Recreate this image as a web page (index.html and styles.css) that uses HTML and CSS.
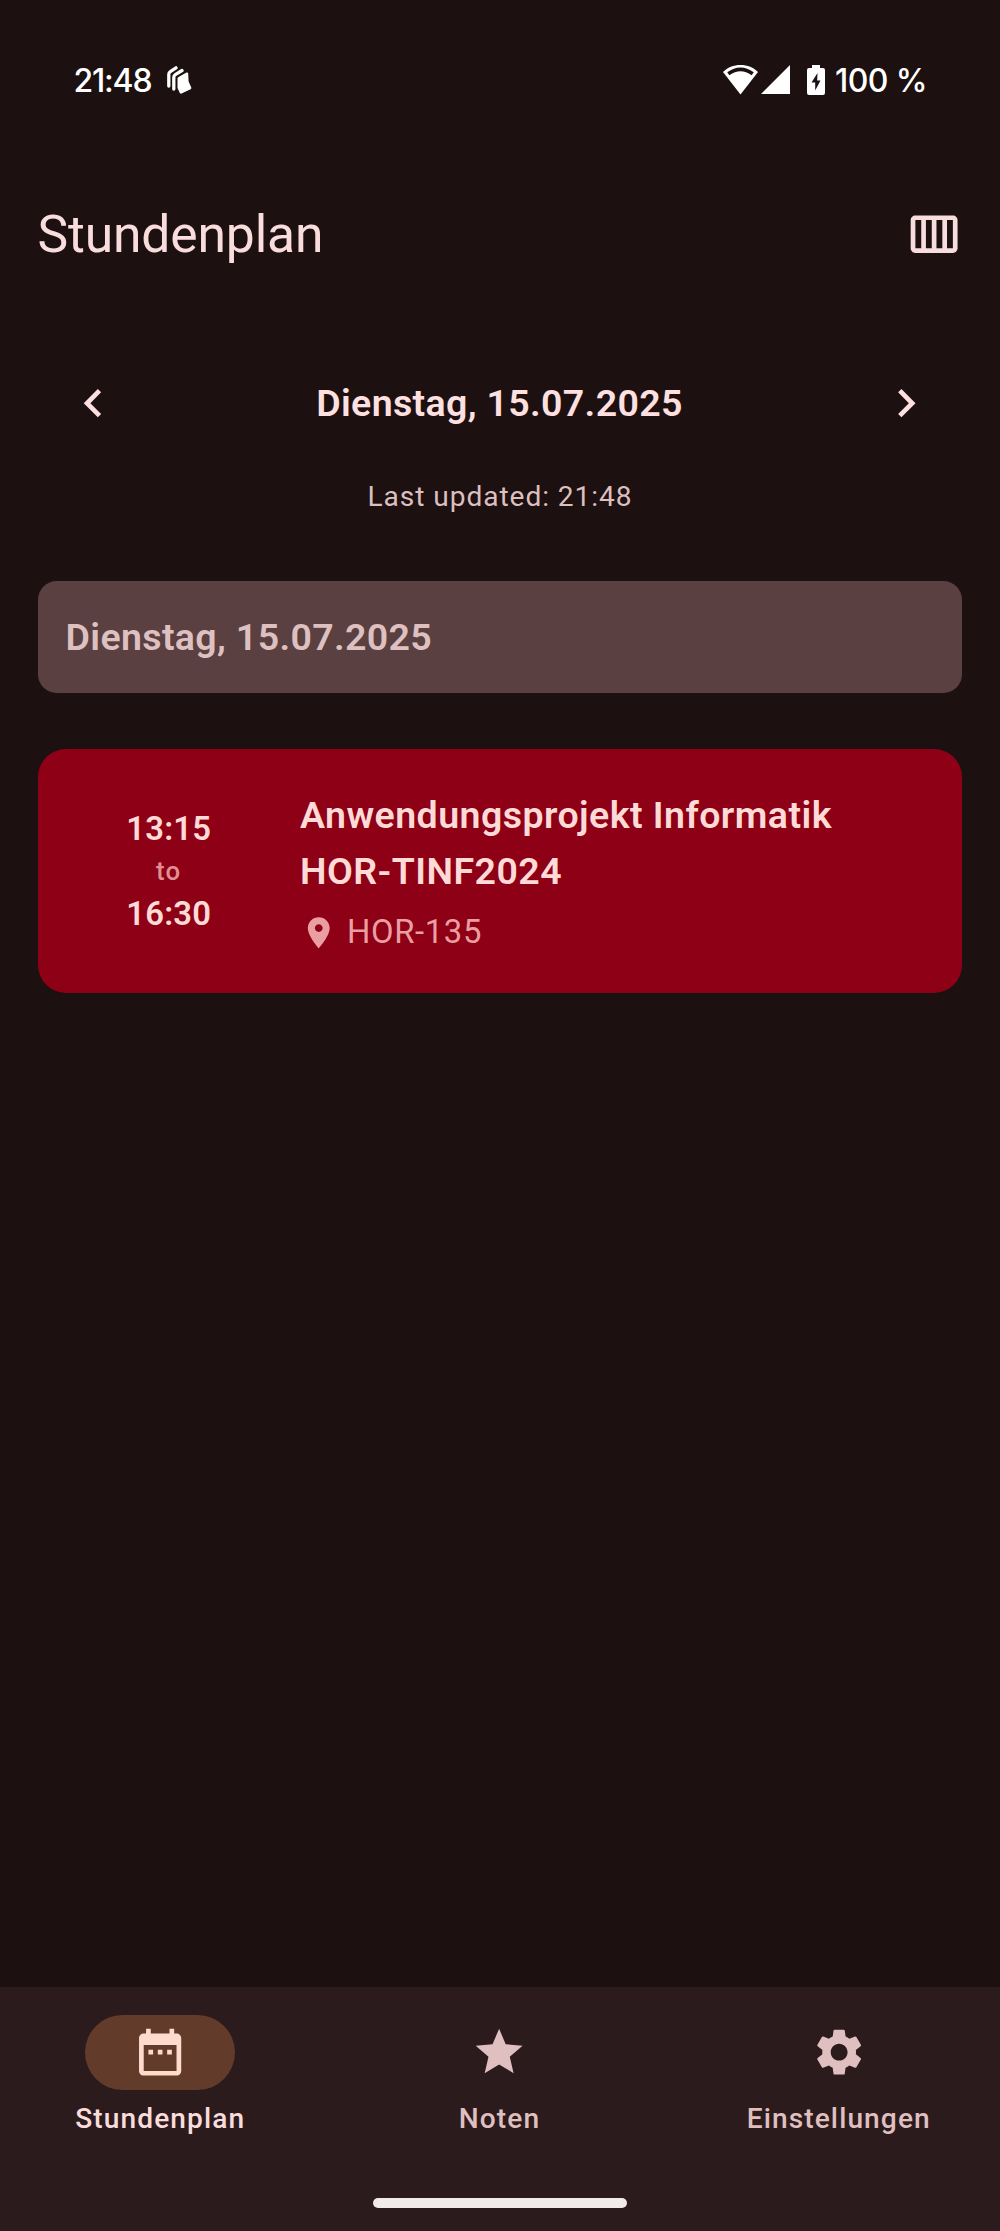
FILE: index.html
```html
<!DOCTYPE html>
<html lang="de">
<head>
<meta charset="utf-8">
<title>Stundenplan</title>
<link rel="stylesheet" href="styles.css">
</head>
<body>
<div class="screen">
  <div class="status-bar">
    <div class="status-left">
      <span class="clock">21:48</span>
      <svg class="cards-icon" viewBox="0 0 25 28"><path d="M1.800 20V8.500Q1.800 6.500 3.300 5.600L9 1.800M6.800 23V11.500Q6.800 9.500 8.300 8.600L15 4.500" fill="none" stroke="#fff" stroke-width="3.300" stroke-linecap="round"/><path d="M10.500 12.500Q10.500 11.500 11.500 11L19.500 6.500Q21 6 21.200 7.500L21.600 15.500L24.300 21.500Q24.600 22.600 23.600 23.200L14.500 27.600Q13.300 28 12.700 26.800L10.500 22Z" fill="#fff"/></svg>
    </div>
    <div class="status-right">
      <svg class="wifi-icon" viewBox="0 0 35 30"><path d="M17.500 0C10.500 0 4.500 2.500 0 7L17.500 29.500L35 7C30.500 2.500 24.500 0 17.500 0Z" fill="#fff"/><path d="M5.300 8.800Q17.500 0 29.700 8.800" fill="none" stroke="#1d1010" stroke-width="3.600"/></svg>
      <svg class="signal-icon" viewBox="0 0 29 29"><path d="M29 0V29H0Z" fill="#fff"/></svg>
      <svg class="battery-icon" viewBox="0 0 18 30"><path d="M5 0H13V3H16Q18 3 18 5V28Q18 30 16 30H2Q0 30 0 28V5Q0 3 2 3H5Z" fill="#fff"/><path d="M10.500 8L4.500 17.500H8.200V25.500L13.500 15.500H10.200Z" fill="#1d1010"/></svg>
      <span class="battery-text">100 %</span>
    </div>
  </div>

  <header class="app-bar">
    <h1>Stundenplan</h1>
    <svg class="icon" viewBox="0 0 24 24"><path d="M20 4H4c-1.100 0-2 .9-2 2v12c0 1.100.9 2 2 2h16c1.100 0 2-.9 2-2V6c0-1.100-.9-2-2-2zm-7 2h2.500v12H13V6zm-2 12H8.500V6H11v12zM4 6h2.500v12H4V6zm16 12h-2.500V6H20v12z"/></svg>
  </header>

  <div class="day-switch">
    <svg class="icon" viewBox="0 0 24 24"><path d="M15.410 7.410 14 6l-6 6 6 6 1.410-1.410L10.830 12z"/></svg>
    <span class="day-title">Dienstag, 15.07.2025</span>
    <svg class="icon" viewBox="0 0 24 24"><path d="M10 6 8.590 7.410 13.170 12l-4.580 4.590L10 18l6-6z"/></svg>
  </div>
  <p class="updated">Last updated: 21:48</p>

  <main class="schedule">
    <h2 class="day-header">Dienstag, 15.07.2025</h2>
    <article class="lesson">
      <div class="lesson-time">
        <span class="time">13:15</span>
        <span class="to">to</span>
        <span class="time">16:30</span>
      </div>
      <div class="lesson-info">
        <h3>Anwendungsprojekt Informatik<br>HOR-TINF2024</h3>
        <div class="room">
          <svg class="pin" viewBox="0 0 24 24"><path d="M12 2C8.130 2 5 5.130 5 9c0 5.250 7 13 7 13s7-7.750 7-13c0-3.870-3.130-7-7-7zm0 9.500c-1.380 0-2.500-1.120-2.500-2.500s1.120-2.500 2.500-2.500 2.500 1.120 2.500 2.500-1.120 2.500-2.500 2.500z"/></svg>
          <span>HOR-135</span>
        </div>
      </div>
    </article>
  </main>

  <footer class="bottom">
    <nav class="tabs">
      <div class="tab active">
        <span class="pill"><svg class="icon" viewBox="0 0 24 24"><path d="M9 11H7v2h2v-2zm4 0h-2v2h2v-2zm4 0h-2v2h2v-2zm2-7h-1V2h-2v2H8V2H6v2H5c-1.110 0-1.990.9-1.990 2L3 20c0 1.100.89 2 2 2h14c1.100 0 2-.9 2-2V6c0-1.100-.9-2-2-2zm0 16H5V9h14v11z"/></svg></span>
        <span class="label">Stundenplan</span>
      </div>
      <div class="tab">
        <span class="pill"><svg class="icon" viewBox="0 0 24 24"><path d="M12 17.270 18.180 21l-1.640-7.030L22 9.240l-7.190-.61L12 2 9.190 8.630 2 9.240l5.460 4.730L5.820 21z"/></svg></span>
        <span class="label">Noten</span>
      </div>
      <div class="tab">
        <span class="pill"><svg class="icon" viewBox="0 0 24 24"><path d="M19.140 12.940c.04-.3.060-.61.060-.94 0-.32-.02-.64-.07-.94l2.030-1.580c.18-.14.230-.41.120-.61l-1.920-3.320c-.12-.22-.37-.29-.59-.22l-2.390.96c-.5-.38-1.030-.7-1.620-.94l-.36-2.540c-.04-.24-.24-.41-.48-.41h-3.840c-.24 0-.43.170-.47.410l-.36 2.540c-.59.240-1.130.57-1.620.94l-2.390-.96c-.22-.08-.47 0-.59.220L2.740 8.870c-.12.210-.08.470.12.610l2.030 1.580c-.05.3-.09.630-.09.940s.02.640.07.940l-2.030 1.580c-.18.140-.23.410-.12.610l1.920 3.320c.12.220.37.290.59.220l2.390-.96c.5.380 1.030.7 1.620.94l.36 2.540c.05.240.24.410.48.410h3.840c.24 0 .44-.17.470-.41l.36-2.540c.59-.24 1.130-.56 1.620-.94l2.390.96c.22.080.47 0 .59-.22l1.920-3.320c.12-.22.070-.47-.12-.61l-2.010-1.580zM12 15.600c-1.980 0-3.600-1.620-3.600-3.600s1.620-3.600 3.600-3.600 3.600 1.620 3.600 3.600-1.620 3.600-3.600 3.600z"/></svg></span>
        <span class="label">Einstellungen</span>
      </div>
    </nav>
    <div class="home-handle"></div>
  </footer>
</div>
</body>
</html>
```
FILE: styles.css
```css
* { box-sizing: border-box; }
body {
  margin: 0;
  background: #1d1010;
  color: #f9dcdc;
  font-family: Roboto, "Liberation Sans", sans-serif;
}
h1, h2, h3, p { margin: 0; }
svg { display: block; flex: none; }

.screen {
  display: flex;
  flex-direction: column;
  height: 2231px;
}
.icon {
  width: 56.25px;
  height: 56.25px;
  fill: currentColor;
}

/* System status bar */
.status-bar {
  display: flex;
  justify-content: space-between;
  align-items: center;
  height: 159.4px;
  padding: 0 73px 0 73.5px;
  color: #fff;
  font: 500 32px/40px Inter, Roboto, sans-serif;
}
.status-left, .status-right { display: flex; align-items: center; }
.clock { padding-top: 2px; letter-spacing: -1.2px; }
.cards-icon { width: 25px; height: 28px; margin-left: 16px; }
.wifi-icon { width: 35px; height: 30px; }
.signal-icon { width: 29px; height: 29px; margin-left: 3px; }
.battery-icon { width: 18px; height: 30px; margin: 0 10px 0 17px; }
.battery-text { padding-top: 2px; letter-spacing: -0.6px; }

/* Title bar */
.app-bar {
  display: flex;
  justify-content: space-between;
  align-items: center;
  height: 150px;
  padding: 0 37.5px;
}
.app-bar h1 {
  font-size: 51.6px;
  font-weight: 400;
  line-height: 65.6px;
  letter-spacing: -0.15px;
}

/* Day navigation */
.day-switch {
  display: flex;
  justify-content: space-between;
  align-items: center;
  height: 112.5px;
  margin-top: 37px;
  padding: 0 66px 0 65px;
  color: #ffe0e0;
}
.day-title, .day-header, .lesson h3 {
  font-size: 37.5px;
  font-weight: 600;
  line-height: 56.25px;
  letter-spacing: 0.35px;
}
.updated {
  margin-top: 19.5px;
  color: #dcbfbf;
  font-size: 28.1px;
  line-height: 37.5px;
  letter-spacing: 0.94px;
  text-align: center;
}

/* Schedule list */
.schedule {
  flex: 1;
  display: flex;
  flex-direction: column;
  gap: 56px;
  padding: 65px 38px 0 37.5px;
}
.day-header {
  padding: 28.1px;
  border-radius: 18.75px;
  background: #5a4040;
  color: #dfc0c0;
}
.lesson {
  display: flex;
  align-items: center;
  gap: 37.5px;
  padding: 37.5px;
  border-radius: 28px;
  background: #8e0016;
  color: #ffdad6;
}
.lesson h3 {
  line-height: 56px;
  letter-spacing: 0.45px;
}
.lesson-time {
  display: flex;
  flex-direction: column;
  align-items: center;
  width: 187.5px;
  padding-top: 1.5px;
}
.time {
  font-size: 32.8px;
  font-weight: 650;
  line-height: 46.9px;
  letter-spacing: 0.23px;
}
.to {
  color: #e09091;
  font-size: 25.8px;
  font-weight: 500;
  line-height: 37.5px;
  letter-spacing: 1.17px;
}
.room {
  display: flex;
  align-items: center;
  gap: 9.4px;
  margin-top: 10px;
  color: #eb9ea1;
  font-size: 32.8px;
  line-height: 46.9px;
  letter-spacing: 0.65px;
}
.pin { width: 37.5px; height: 37.5px; fill: currentColor; }

/* Bottom navigation */
.bottom {
  display: flex;
  flex-direction: column;
  align-items: center;
  height: 244px;
  padding-top: 28.1px;
  background: #2c1b1c;
}
.tabs {
  display: grid;
  grid-template-columns: repeat(3, 1fr);
  gap: 18.75px;
  width: 100%;
  padding-right: 1px;
}
.tab {
  display: flex;
  flex-direction: column;
  align-items: center;
  gap: 10px;
  color: #dfbfbf;
}
.pill {
  display: flex;
  align-items: center;
  justify-content: center;
  width: 150px;
  height: 75px;
  border-radius: 37.5px;
}
.label {
  font-size: 28.1px;
  font-weight: 500;
  line-height: 37.5px;
  letter-spacing: 1.1px;
}
.active .pill { background: #633b2a; color: #ffdbcd; }
.active .label { color: #f9dcdc; }
.home-handle {
  width: 254px;
  height: 10px;
  margin-top: 60.5px;
  border-radius: 5px;
  background: #f0eaea;
}
```
